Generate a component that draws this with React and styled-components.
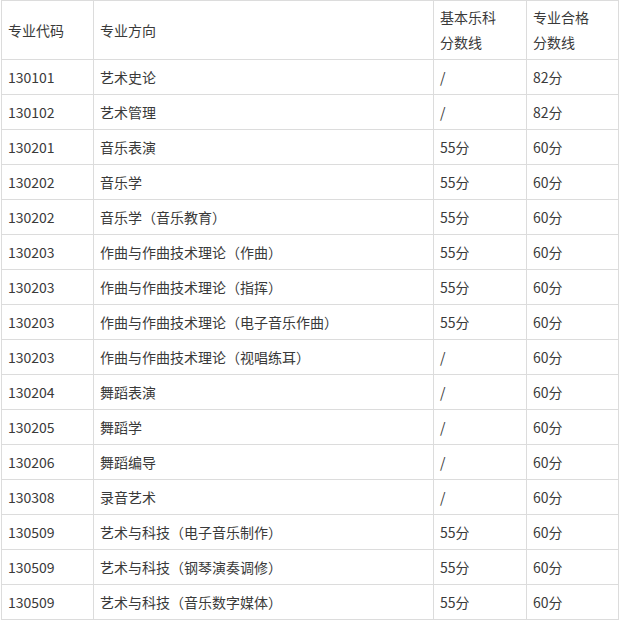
import React from "react";
import styled, { createGlobalStyle } from "styled-components";

const GlobalStyle = createGlobalStyle`
  html, body {
    margin: 0;
    padding: 0;
    background: #fff;
  }
  body {
    font-family: "Noto Sans CJK SC", "Noto Sans", "Liberation Sans", sans-serif;
    color: #3a3a3a;
  }
`;

const Page = styled.div`
  padding: 0 0 0 1px;
`;

const Table = styled.table`
  border-collapse: collapse;
  table-layout: fixed;
  width: 617px;
  font-size: 14px;
`;

const Col = styled.col`
  width: ${(p) => p.$w}px;
`;

const Cell = styled.td`
  border: 1px solid #dcdcdc;
  padding: 0 5px 0 6px;
  height: ${(p) => (p.$head ? 58 : 34)}px;
  line-height: 25px;
  vertical-align: middle;
  text-align: left;
  white-space: nowrap;
`;

const widths = [92, 340, 93, 92];

const rows = [
  ["130101", "艺术史论", "/", "82分"],
  ["130102", "艺术管理", "/", "82分"],
  ["130201", "音乐表演", "55分", "60分"],
  ["130202", "音乐学", "55分", "60分"],
  ["130202", "音乐学（音乐教育）", "55分", "60分"],
  ["130203", "作曲与作曲技术理论（作曲）", "55分", "60分"],
  ["130203", "作曲与作曲技术理论（指挥）", "55分", "60分"],
  ["130203", "作曲与作曲技术理论（电子音乐作曲）", "55分", "60分"],
  ["130203", "作曲与作曲技术理论（视唱练耳）", "/", "60分"],
  ["130204", "舞蹈表演", "/", "60分"],
  ["130205", "舞蹈学", "/", "60分"],
  ["130206", "舞蹈编导", "/", "60分"],
  ["130308", "录音艺术", "/", "60分"],
  ["130509", "艺术与科技（电子音乐制作）", "55分", "60分"],
  ["130509", "艺术与科技（钢琴演奏调修）", "55分", "60分"],
  ["130509", "艺术与科技（音乐数字媒体）", "55分", "60分"],
];

export default function App() {
  return (
    <Page>
      <GlobalStyle />
      <Table>
        <colgroup>
          {widths.map((w, i) => (
            <Col key={i} $w={w} />
          ))}
        </colgroup>
        <tbody>
          <tr>
            <Cell $head>专业代码</Cell>
            <Cell $head>专业方向</Cell>
            <Cell $head>
              基本乐科
              <br />
              分数线
            </Cell>
            <Cell $head>
              专业合格
              <br />
              分数线
            </Cell>
          </tr>
          {rows.map((r, i) => (
            <tr key={i}>
              {r.map((c, j) => (
                <Cell key={j}>{c}</Cell>
              ))}
            </tr>
          ))}
        </tbody>
      </Table>
    </Page>
  );
}
